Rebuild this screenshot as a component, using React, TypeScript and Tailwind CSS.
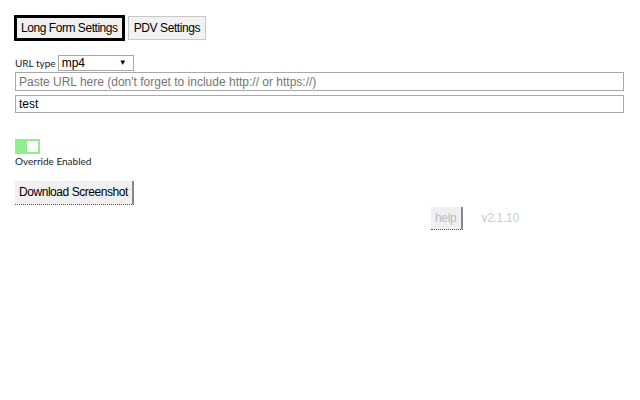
import React, { useState } from 'react'

const arial = { fontFamily: '"Liberation Sans", Arial, sans-serif' }
const segoe = { fontFamily: 'Lato, "Open Sans", sans-serif' }

export default function App() {
    const [enabled] = useState(true)
    return (
        <div className="h-[400px] w-[640px] bg-white text-black" style={arial}>
            <div className="flex flex-col pl-[15px] pr-[16px] pt-[15px]">
                <div className="-ml-[1px] flex items-start gap-[3px]">
                    <button className="h-[26px] border-[3px] border-black bg-[#f0f0f0] px-[4px] text-[12px] tracking-[-0.45px] text-black">
                        Long Form Settings
                    </button>
                    <button className="mt-[1px] h-[24px] border border-[#c8c8c8] bg-[#f2f2f2] px-[5px] text-[12px] tracking-[-0.4px] text-black">
                        PDV Settings
                    </button>
                </div>
                <div className="mt-[14px] flex h-[16px] items-center gap-[2px]">
                    <span className="text-[10px] text-[#222]" style={segoe}>
                        URL type
                    </span>
                    <div className="flex h-[16px] w-[76px] items-center justify-between border border-[#a9a9a9] bg-white pl-[3px] pr-[6px] text-[12px]">
                        <span>mp4</span>
                        <span className="text-[8px]">▼</span>
                    </div>
                </div>
                <div className="mt-[1px] flex h-[19px] items-center border border-[#a9a9a9] bg-white px-[3px] text-[12px] text-[#757575]">
                    Paste URL here (don't forget to include http:// or https://)
                </div>
                <div className="mt-[4px] flex h-[18px] items-center border border-[#a9a9a9] bg-white px-[3px] text-[12px] text-black">
                    test
                </div>
                <div className="mt-[26px] flex h-[15px] w-[25px] items-center justify-end bg-[#90ee90] p-[2px]">
                    {enabled && <div className="h-[11px] w-[11px] bg-white" />}
                </div>
                <span className="text-[10px] leading-[14px] text-[#222]" style={segoe}>
                    Override Enabled
                </span>
                <div className="mt-[11px]">
                    <button className="h-[24px] border-r-2 border-b border-r-[#888] border-b-[#555] border-dotted bg-[#f0f0f0] px-[4px] text-[12px] tracking-[-0.45px] text-black" style={{ borderRightStyle: 'solid' }}>
                        Download Screenshot
                    </button>
                </div>
                <div className="mt-[2px] flex items-center pl-[416px]">
                    <button className="h-[23px] border-r-2 border-b border-r-[#888] border-b-[#555] border-dotted bg-[#f0f0f0] px-[4px] text-[12px] tracking-[-0.3px] text-[#bbb]" style={{ borderRightStyle: 'solid' }}>
                        help
                    </button>
                    <span className="ml-[19px] text-[12px] tracking-[-0.3px] text-[#ccc]">v2.1.10</span>
                </div>
            </div>
        </div>
    )
}
